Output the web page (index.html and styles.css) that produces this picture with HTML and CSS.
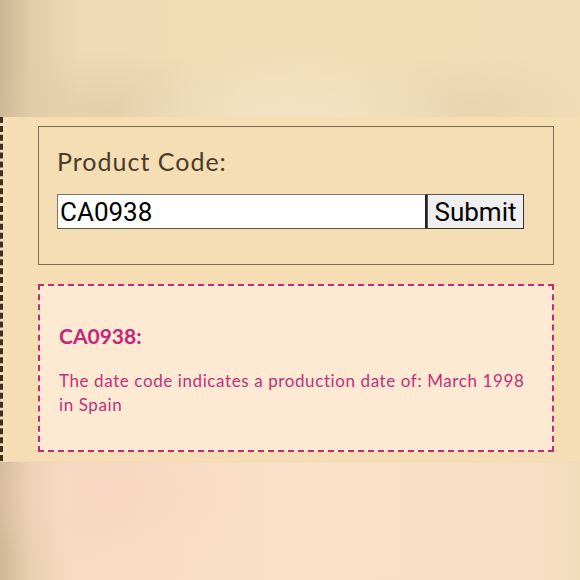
FILE: index.html
```html
<!DOCTYPE html>
<html>
<head>
<meta charset="utf-8">
<link rel="stylesheet" href="styles.css">
</head>
<body>
<div class="blur-top"></div>
<main class="page">
  <form class="lookup">
    <label class="lookup-label" for="code">Product Code:</label>
    <div class="lookup-row">
      <input id="code" class="lookup-input" type="text" value="CA0938">
      <button class="lookup-btn" type="button">Submit</button>
    </div>
  </form>
  <section class="result">
    <h3 class="result-title">CA0938:</h3>
    <p class="result-text">The date code indicates a production date of: March 1998 in Spain</p>
  </section>
</main>
<div class="blur-bottom"></div>
</body>
</html>
```

FILE: styles.css
```css
html, body {
  margin: 0;
  padding: 0;
}
body {
  width: 580px;
  height: 580px;
  overflow: hidden;
  display: flex;
  flex-direction: column;
  background: #f5deb3;
}
.blur-top {
  height: 117px;
  flex: none;
  background:
    radial-gradient(ellipse 180px 80px at 290px 125px, rgba(242,228,200,0.9), rgba(242,228,200,0) 100%),
    radial-gradient(ellipse 140px 60px at 110px 110px, rgba(220,200,165,0.6), rgba(220,200,165,0) 100%),
    radial-gradient(ellipse 140px 60px at 470px 110px, rgba(222,204,170,0.5), rgba(222,204,170,0) 100%),
    linear-gradient(to right, #cbb594 0px, #e2cda8 30px, #efdab3 80px, #f3ddb5 300px, #f2ddb6 580px);
}
.page {
  flex: none;
  height: 344px;
  box-sizing: border-box;
  border-left: 3px dashed #3e3020;
  padding: 9px 26px 0 35px;
  font-family: "Lato", "Open Sans", sans-serif;
}
.lookup {
  box-sizing: border-box;
  height: 139px;
  border: 1px solid #7d6d52;
  padding: 17px 18px 0 18px;
  display: flex;
  flex-direction: column;
}
.lookup-label {
  font-size: 25px;
  letter-spacing: 1px;
  color: #4a3c2a;
  line-height: 34px;
}
.lookup-row {
  display: flex;
  margin-top: 16px;
}
.lookup-input {
  box-sizing: border-box;
  width: 370px;
  height: 35px;
  border: 1px solid #555;
  border-top-color: #777;
  border-left-color: #777;
  border-right: 2px solid #222;
  background: #fff;
  font-family: "Roboto", sans-serif;
  font-size: 26px;
  color: #000;
  padding: 0 2px;
  margin: 0;
  outline: none;
}
.lookup-btn {
  box-sizing: border-box;
  width: 97px;
  height: 35px;
  border: 1px solid #555;
  border-right-color: #333;
  border-bottom-color: #333;
  background: #efefef;
  font-family: "Roboto", sans-serif;
  font-size: 26px;
  color: #000;
  padding: 0;
  margin: 0;
}
.result {
  margin-top: 19px;
  box-sizing: border-box;
  height: 168px;
  border: 2px dashed #c52a78;
  background: #feead3;
  padding: 0 19px;
  color: #c2307c;
}
.result-title {
  margin: 36px 0 0 0;
  font-size: 21px;
  font-weight: 700;
  line-height: 28px;
  color: #c4267a;
}
.result-text {
  margin: 19px 0 0 0;
  font-size: 17px;
  letter-spacing: 0.6px;
  line-height: 24px;
}
.blur-bottom {
  flex: 1;
  background:
    radial-gradient(ellipse 150px 80px at 110px 30px, rgba(248,214,196,0.7), rgba(248,214,196,0) 100%),
    linear-gradient(to right, #cfb796 0px, #e8cfb0 30px, #f7dbc2 70px, #fae0c8 300px, #f8dec4 540px, #f3dcbc 580px);
  border-top: 1px solid #efd9b6;
}
```
